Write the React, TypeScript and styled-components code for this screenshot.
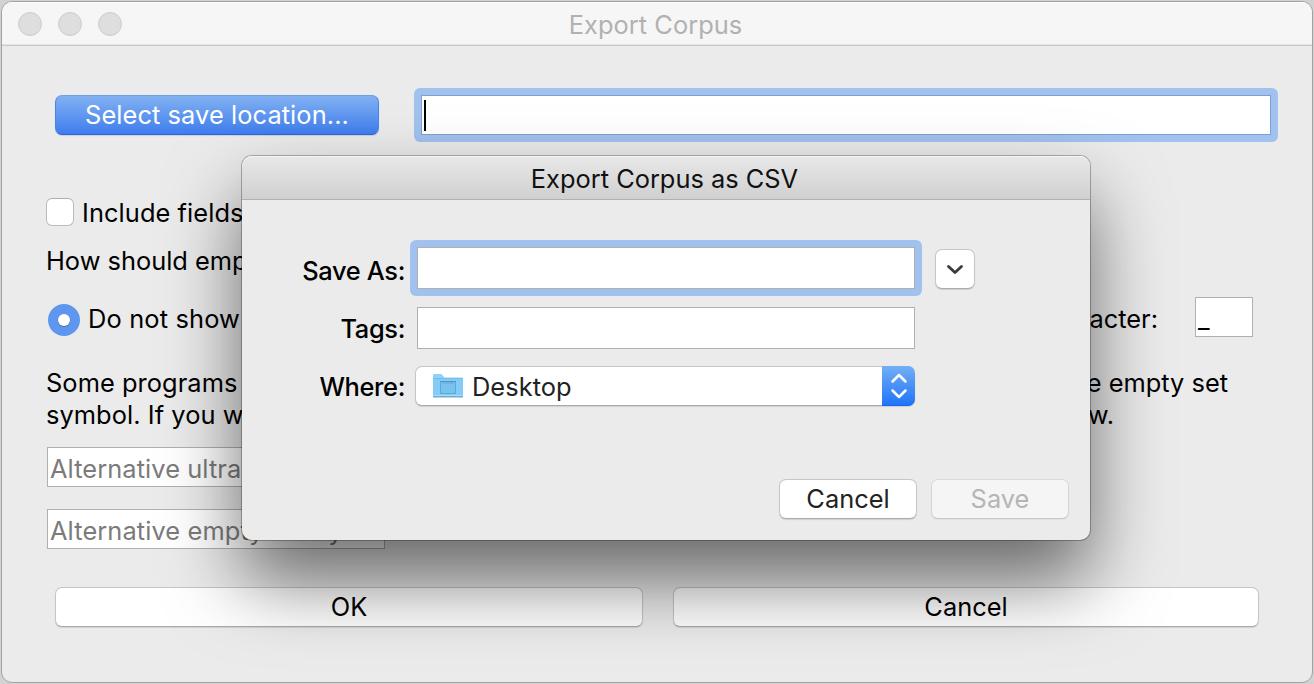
import React from "react";
import styled, { createGlobalStyle, css } from "styled-components";

const GlobalStyle = createGlobalStyle`
  *, *::before, *::after { box-sizing: border-box; }
  body {
    margin: 0;
    background: #d2d2d2;
    overflow: hidden;
    font-family: Inter, "Liberation Sans", sans-serif;
    font-size: 25.4px;
    color: #000;
  }
`;

const Window = styled.main`
  position: relative;
  width: 1312px;
  height: 682px;
  margin: 1px;
  border: 1px solid #a2a2a2;
  border-radius: 11px;
  background: #ebebeb;
  overflow: hidden;
`;

const TitleBar = styled.header`
  position: relative;
  display: flex;
  align-items: center;
  justify-content: center;
  height: 44px;
  padding: 2px 3px 0 0;
  background: #f6f6f6;
  border-bottom: 1px solid #c9c9c9;
  box-shadow: inset 0 -1px #e4e4e4, inset 0 1px #fdfdfd;
  color: #b1b1b1;
`;

const Lights = styled.div`
  position: absolute;
  left: 16px;
  top: 10px;
  display: flex;
  gap: 16px;
`;

const Light = styled.i`
  width: 24px;
  height: 24px;
  border-radius: 50%;
  background: #dedede;
  border: 1px solid #cccccc;
`;

const Label = styled.span<{ $track?: number }>`
  white-space: nowrap;
  line-height: 32px;
  letter-spacing: ${(p) => p.$track ?? 0}px;
`;

const Form = styled.section`
  display: flex;
  flex-direction: column;
  align-items: flex-start;
  padding: 49px 0 0 44px;
`;

const Row = styled.div<{ $top: number; $height: number; $gap?: number; $indent?: number }>`
  display: flex;
  align-items: center;
  gap: ${(p) => p.$gap ?? 0}px;
  height: ${(p) => p.$height}px;
  margin-top: ${(p) => p.$top}px;
  padding-left: ${(p) => p.$indent ?? 0}px;
`;

const SplitRow = styled(Row)<{ $width: number }>`
  width: ${(p) => p.$width}px;
  justify-content: space-between;
  align-items: flex-start;
`;

const Cluster = styled.div<{ $gap: number }>`
  display: flex;
  align-items: flex-start;
  gap: ${(p) => p.$gap}px;
`;

const LoweredLabel = styled(Label)<{ $drop: number }>`
  padding-top: ${(p) => p.$drop}px;
`;

const Button = styled.button<{ $width: number; $kind?: "primary" | "disabled"; $ink?: string }>`
  display: flex;
  align-items: center;
  justify-content: center;
  flex: none;
  width: ${(p) => p.$width}px;
  height: 40px;
  padding: 0;
  font: inherit;
  border: 1px solid #c6c6c6;
  border-bottom-color: #ababab;
  border-radius: 7px;
  background: #fff;
  color: ${(p) => p.$ink ?? "#000"};
  box-shadow: 0 1px 1px rgba(0, 0, 0, 0.12);
  ${(p) =>
    p.$kind === "primary" &&
    css`
      color: #fff;
      border-color: #6c9fe8 #4a86ea #2a64e6;
      background: linear-gradient(#84b2f1, #3d7cee) border-box;
    `}
  ${(p) =>
    p.$kind === "disabled" &&
    css`
      color: #b5b5b5;
      background: #f5f5f5;
      border-color: #dadada #d6d6d6 #c9c9c9;
      box-shadow: 0 1px 1px rgba(0, 0, 0, 0.05);
    `}
`;

const Field = styled.div<{ $width: number; $height: number; $edge?: string }>`
  display: flex;
  align-items: center;
  flex: none;
  width: ${(p) => p.$width}px;
  height: ${(p) => p.$height}px;
  padding: 4px 2px 0;
  border: 1px solid ${(p) => p.$edge ?? "#b0b0b0"};
  background: #fff;
  color: #7b7b7b;
`;

const FocusRing = styled.div`
  flex: none;
  padding: 7px;
  margin: -7px;
  border-radius: 6px;
  background: #a1c2ee;
`;

const Caret = styled.i`
  width: 2px;
  height: 31px;
  margin-top: -3px;
  background: #000;
`;

const Underscore = styled.span`
  align-self: flex-end;
  padding-bottom: 1px;
  line-height: 32px;
  color: #000;
`;

const Checkbox = styled.i`
  width: 28px;
  height: 28px;
  background: #fff;
  border: 1px solid #bcbcbc;
  border-top-color: #adadad;
  border-radius: 6px;
`;

const Radio = styled.i`
  display: flex;
  align-items: center;
  justify-content: center;
  width: 32px;
  height: 32px;
  margin: 7px 0 0 2px;
  border-radius: 50%;
  background: #5e97ee;
  &::after {
    content: "";
    width: 12px;
    height: 12px;
    border-radius: 50%;
    background: #fff;
    box-shadow: 0 1px 1px rgba(0, 0, 60, 0.25);
  }
`;

const Dialog = styled.section`
  position: absolute;
  left: 240px;
  top: 154px;
  width: 848px;
  height: 384px;
  border-radius: 10px;
  background: #ebebeb;
  box-shadow: 0 0 0 1px rgba(0, 0, 0, 0.27), 0 40px 76px rgba(0, 0, 0, 0.56);
`;

const DialogTitle = styled.header`
  display: flex;
  align-items: center;
  justify-content: center;
  height: 44px;
  padding: 3px 3px 0 0;
  border-radius: 10px 10px 0 0;
  border-bottom: 1px solid #b1b1b1;
  background: linear-gradient(#e8e8e8, #d0d0d0);
  box-shadow: inset 0 1px #f6f6f6;
  color: #111;
`;

const DialogForm = styled.div`
  display: grid;
  grid-template-columns: 163px 498px auto;
  grid-template-rows: 42px 42px 41px;
  column-gap: 12px;
  row-gap: 18px;
  padding-top: 47px;
`;

const FormLabel = styled(Label)<{ $drop: number }>`
  justify-self: end;
  padding-top: ${(p) => p.$drop}px;
  font-weight: 500;
`;

const ExpandCell = styled.div`
  padding: 2px 0 0 8px;
`;

const Select = styled.div`
  display: flex;
  align-items: center;
  width: 500px;
  height: 40px;
  margin: -1px 0 0 -2px;
  padding-left: 16px;
  background: #fff;
  border: 1px solid #c6c6c6;
  border-bottom-color: #ababab;
  border-right: 0;
  border-radius: 7px;
  box-shadow: 0 1px 1px rgba(0, 0, 0, 0.12);
  color: #222;
`;

const SelectText = styled(Label)`
  padding: 2px 0 0 8px;
`;

const Stepper = styled.div`
  display: flex;
  align-items: center;
  justify-content: center;
  width: 33px;
  height: 40px;
  margin: 0 0 0 auto;
  border-radius: 0 7px 7px 0;
  background: linear-gradient(#74aef6, #1f75f8);
  border-bottom: 1px solid #1762f0;
`;

const Footer = styled.footer`
  display: flex;
  justify-content: flex-end;
  gap: 14px;
  padding: 71px 21px 0 0;
`;

const FolderIcon = () => (
  <svg width="32" height="26" viewBox="0 0 32 26">
    <path d="M1 24V2q0-1 1-1h7.500l3 3.500H30q1 0 1 1V24z" fill="#8fd3f8" />
    <path d="M1 6h30v16H1z" fill="#84ccf5" />
    <path d="M1 5.500h30" stroke="#74bde8" />
    <path d="M1 22.500h30" stroke="#a3dbf9" />
    <path d="M1 23.500h30" stroke="#62b0de" />
    <path d="M1 24.500h30" stroke="#d0d0d0" />
    <path d="M8.500 8.500h15v12h-15z" fill="#79c2ee" stroke="#5aabdc" />
    <path d="M8 8.500h16" stroke="#4b97ca" />
    <path d="M10 10h12" stroke="#5ba9da" />
  </svg>
);

const StepIcon = () => (
  <svg width="18" height="26" viewBox="0 0 18 26" fill="none" stroke="#fff" strokeWidth="2.500" strokeLinecap="round" strokeLinejoin="round">
    <path d="M2.500 8.500 9 2l6.500 6.500M2.500 17.500 9 24l6.500-6.500" />
  </svg>
);

const ChevronIcon = () => (
  <svg width="18" height="14" viewBox="0 0 18 14" fill="none" stroke="#3a3a3a" strokeWidth="2.800" strokeLinecap="round" strokeLinejoin="round">
    <path d="M2.500 4.500 9 10.600l6.500-6.100" />
  </svg>
);

export default function App() {
  return (
    <>
      <GlobalStyle />
      <Window>
        <TitleBar>
          <Lights>
            <Light />
            <Light />
            <Light />
          </Lights>
          <Label $track={0.05}>Export Corpus</Label>
        </TitleBar>

        <Form>
          <Row $top={0} $height={40} $gap={42} $indent={9}>
            <Button $width={324} $kind="primary">
              <Label $track={0.08}>Select save location...</Label>
            </Button>
            <FocusRing>
              <Field $width={850} $height={40} $edge="#7f9fd0">
                <Caret />
              </Field>
            </FocusRing>
          </Row>

          <Row $top={62} $height={30} $gap={8}>
            <Checkbox />
            <LoweredLabel $drop={1} $track={0.08}>Include fields</LoweredLabel>
          </Row>

          <Row $top={18} $height={32}>
            <Label>How should empty</Label>
          </Row>

          <SplitRow $top={20} $height={46} $width={1207}>
            <Cluster $gap={8}>
              <Radio />
              <LoweredLabel $drop={6} $track={0.15}>Do not show</LoweredLabel>
            </Cluster>
            <Cluster $gap={37}>
              <LoweredLabel $drop={6}>character:</LoweredLabel>
              <Field $width={58} $height={40}>
                <Underscore>_</Underscore>
              </Field>
            </Cluster>
          </SplitRow>

          <SplitRow $top={24} $height={32} $width={1182}>
            <Label $track={0.06}>Some programs</Label>
            <Label>the empty set</Label>
          </SplitRow>
          <SplitRow $top={0} $height={32} $width={1068}>
            <Label $track={0.06}>symbol. If you want</Label>
            <Label>below.</Label>
          </SplitRow>

          <Row $top={16} $height={40} $indent={1}>
            <Field $width={338} $height={40}>
              <Label $track={0.08}>Alternative ultrametric</Label>
            </Field>
          </Row>
          <Row $top={22} $height={40} $indent={1}>
            <Field $width={338} $height={40}>
              <Label $track={0.1}>Alternative empty in any</Label>
            </Field>
          </Row>

          <Row $top={38} $height={40} $gap={30} $indent={9}>
            <Button $width={588}>
              <Label>OK</Label>
            </Button>
            <Button $width={586}>
              <Label>Cancel</Label>
            </Button>
          </Row>
        </Form>

        <Dialog>
          <DialogTitle>
            <Label>Export Corpus as CSV</Label>
          </DialogTitle>
          <DialogForm>
            <FormLabel $drop={8} $track={-0.35}>Save As:</FormLabel>
            <FocusRing>
              <Field $width={498} $height={42} />
            </FocusRing>
            <ExpandCell>
              <Button $width={40}>
                <ChevronIcon />
              </Button>
            </ExpandCell>

            <FormLabel $drop={6} $track={-0.35}>Tags:</FormLabel>
            <Field $width={498} $height={42} />
            <span />

            <FormLabel $drop={4} $track={-0.35}>Where:</FormLabel>
            <Select>
              <FolderIcon />
              <SelectText $track={0.05}>Desktop</SelectText>
              <Stepper>
                <StepIcon />
              </Stepper>
            </Select>
          </DialogForm>
          <Footer>
            <Button $width={138} $ink="#222">
              <Label>Cancel</Label>
            </Button>
            <Button $width={138} $kind="disabled">
              <Label>Save</Label>
            </Button>
          </Footer>
        </Dialog>
      </Window>
    </>
  );
}
